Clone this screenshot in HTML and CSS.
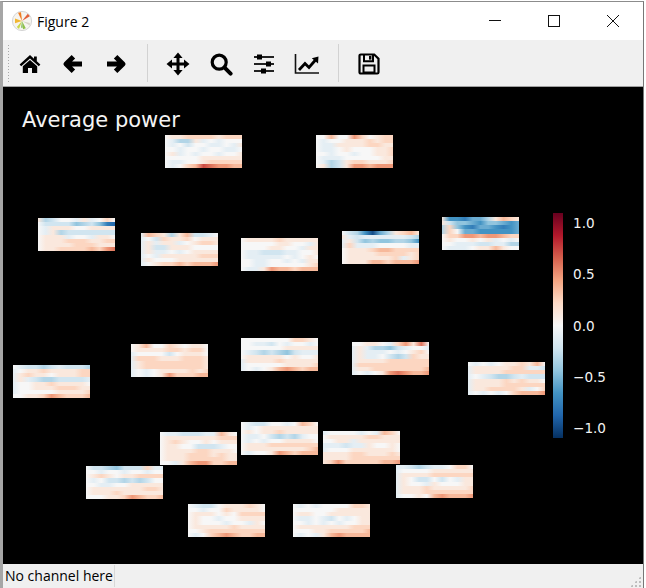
FILE: index.html
```html
<!DOCTYPE html>
<html lang="en">
<head>
<meta charset="utf-8">
<title>Figure 2</title>
<link rel="stylesheet" href="styles.css">
</head>
<body>
<div class="window">
  <header class="titlebar">
    <svg class="appicon" width="22" height="22" viewBox="0 0 22 22" aria-hidden="true">
      <circle cx="11" cy="11" r="9.6" fill="#f6f4ef" stroke="#d5d5d5" stroke-width="1"/>
      <path d="M11 11L4 8.5V13.2Z" fill="#f2b632"/>
      <path d="M11 11L7 2.8L10 2.2Z" fill="#ef7d22"/>
      <path d="M11 11L16.8 3.8L18.8 6.2Z" fill="#e2603a"/>
      <path d="M11 11L18.8 13V15.4Z" fill="#d9d4c8"/>
      <path d="M11 11L14.8 18.2L12 19.2Z" fill="#8fc149"/>
      <path d="M11 11L8 19L5.8 17Z" fill="#c9d648"/>
      <path d="M11 11L11.6 17.8H10.2Z" fill="#6fb04a"/>
    </svg>
    <span class="title">Figure 2</span>
    <div class="winbtns">
      <div class="winbtn"><svg width="14" height="14" viewBox="0 0 14 14" aria-hidden="true"><path d="M1 6.5H13" stroke="#111" stroke-width="1"/></svg></div>
      <div class="winbtn"><svg width="14" height="14" viewBox="0 0 14 14" aria-hidden="true"><rect x="1.5" y="1.5" width="11" height="11" fill="none" stroke="#111" stroke-width="1"/></svg></div>
      <div class="winbtn"><svg width="14" height="14" viewBox="0 0 14 14" aria-hidden="true"><path d="M1 1L13 13M13 1L1 13" stroke="#111" stroke-width="1"/></svg></div>
    </div>
  </header>

  <nav class="toolbar">
    <div class="grip"></div>
    <div class="tool"><svg width="24" height="24" viewBox="0 0 24 24" aria-hidden="true"><path d="M12 3L1.6 12.4L3.2 14.2L12 6.4L20.8 14.2L22.4 12.4L18.8 9.2V4.4H16V6.7Z" fill="#000"/><path d="M12 8L4.8 14.2V21H10V16H14V21H19.2V14.2Z" fill="#000"/></svg></div>
    <div class="tool"><svg width="24" height="24" viewBox="0 0 24 24" aria-hidden="true"><path d="M21 12H6M12.4 4.8L5 12L12.4 19.2" fill="none" stroke="#000" stroke-width="5" stroke-linejoin="round"/></svg></div>
    <div class="tool"><svg width="24" height="24" viewBox="0 0 24 24" aria-hidden="true"><path d="M3 12H18M11.6 4.8L19 12L11.6 19.2" fill="none" stroke="#000" stroke-width="5" stroke-linejoin="round"/></svg></div>
    <div class="sep"></div>
    <div class="tool"><svg width="24" height="24" viewBox="0 0 24 24" aria-hidden="true"><path d="M12 4V20M4 12H20" stroke="#000" stroke-width="3"/><path d="M12 .5L16.6 6H7.4ZM12 23.5L16.6 18H7.4ZM.5 12L6 7.4V16.6ZM23.5 12L18 7.4V16.6Z" fill="#000"/></svg></div>
    <div class="tool"><svg width="24" height="24" viewBox="0 0 24 24" aria-hidden="true"><circle cx="10.2" cy="10.2" r="7" fill="none" stroke="#000" stroke-width="3.2"/><path d="M15.6 15.6L21.6 21.6" stroke="#000" stroke-width="4" stroke-linecap="round"/></svg></div>
    <div class="tool"><svg width="24" height="24" viewBox="0 0 24 24" aria-hidden="true"><path d="M2 5H22M2 12H22M2 19H22" stroke="#222" stroke-width="2"/><rect x="5" y="2.5" width="5" height="5" fill="#000"/><rect x="14" y="9.5" width="5" height="5" fill="#000"/><rect x="9" y="16.5" width="5" height="5" fill="#000"/></svg></div>
    <div class="tool"><svg width="26" height="24" viewBox="0 0 26 24" aria-hidden="true"><path d="M1.5 2V21H25" fill="none" stroke="#111" stroke-width="1.6"/><path d="M5 18L11 11.5L15 15.5L21.5 8" fill="none" stroke="#000" stroke-width="2.8"/><path d="M24.5 4.5L24 11.5L17.8 6.2Z" fill="#000"/></svg></div>
    <div class="sep"></div>
    <div class="tool"><svg width="24" height="24" viewBox="0 0 24 24" aria-hidden="true"><path d="M3.8 2.5H17.2L21.5 6.8V20.2A1.3 1.3 0 0 1 20.2 21.5H3.8A1.3 1.3 0 0 1 2.5 20.2V3.8A1.3 1.3 0 0 1 3.8 2.5Z" fill="none" stroke="#000" stroke-width="2.2"/><path d="M7 3V9.2H16V3" fill="none" stroke="#000" stroke-width="2"/><rect x="12" y="4" width="2.4" height="3.6" fill="#000"/><rect x="6.5" y="13.5" width="11" height="7" fill="none" stroke="#000" stroke-width="2"/></svg></div>
  </nav>

  <main class="plot" id="plot">
    <div class="plot-title">Average power</div>
    <div class="colorbar"></div>
    <span class="tick tick-a">1.0</span>
    <span class="tick tick-b">0.5</span>
    <span class="tick tick-c">0.0</span>
    <span class="tick tick-d">−0.5</span>
    <span class="tick tick-e">−1.0</span>
  </main>

  <footer class="statusbar">
    <span class="status-text">No channel here</span>
    <div class="sizegrip"></div>
  </footer>
</div>
<script src="script.js"></script>
</body>
</html>
```
FILE: styles.css
```css
html, body {
  margin: 0;
  padding: 0;
  background: #fff;
}
.window {
  box-sizing: border-box;
  width: 644px;
  height: 587px;
  margin-top: 1px;
  border-top: 1px solid #8c8c8c;
  border-left: 3px solid #a6a6a6;
  border-right: 1px solid #777;
  display: flex;
  flex-direction: column;
  overflow: hidden;
}
.titlebar {
  height: 38px;
  flex: none;
  display: flex;
  align-items: center;
  background: #fff;
  padding-left: 8px;
}
.appicon { flex: none; }
.title {
  margin-left: 4px;
  font: 14px "Open Sans", sans-serif;
  color: #000;
}
.winbtns {
  margin-left: auto;
  margin-right: 1px;
  display: flex;
}
.winbtn {
  width: 59px;
  height: 38px;
  display: flex;
  align-items: center;
  justify-content: center;
}
.toolbar {
  height: 46px;
  flex: none;
  display: flex;
  align-items: center;
  background: #f0f0f0;
  border-bottom: 1px solid #a0a0a0;
  box-sizing: content-box;
}
.grip {
  width: 2px;
  height: 38px;
  margin-left: 3.5px;
  flex: none;
  background-image: radial-gradient(circle, #a8a8a8 0.9px, transparent 1px);
  background-size: 3px 3px;
}
.tool {
  box-sizing: border-box;
  width: 43px;
  height: 46px;
  padding-top: 2px;
  flex: none;
  display: flex;
  align-items: center;
  justify-content: center;
}
.sep {
  width: 1px;
  height: 38px;
  flex: none;
  margin: 0 9px;
  background: #d2d2d2;
}
.plot {
  position: relative;
  flex: 1;
  background: #000;
  overflow: hidden;
}
.plot-title {
  position: absolute;
  left: 19px;
  top: 20px;
  font: 21px/26px "DejaVu Sans", sans-serif;
  color: #f4f4f4;
  white-space: nowrap;
}
.tile {
  position: absolute;
  display: block;
  width: 77px;
  height: 33px;
}
.colorbar {
  position: absolute;
  left: 550px;
  top: 126px;
  width: 10px;
  height: 225px;
  background: linear-gradient(to bottom, #67001f 0%, #b2182b 10%, #d6604d 20%, #f4a582 30%, #fddbc7 40%, #f7f7f7 50%, #d1e5f0 60%, #92c5de 70%, #4393c3 80%, #2166ac 90%, #053061 100%);
}
.tick {
  position: absolute;
  left: 570px;
  font: 13.6px/16px "DejaVu Sans", sans-serif;
  color: #f2f2f2;
  white-space: nowrap;
}
.tick-a { top: 128px; }
.tick-b { top: 179px; }
.tick-c { top: 231px; }
.tick-d { top: 282px; }
.tick-e { top: 333px; }
.statusbar {
  height: 24px;
  flex: none;
  display: flex;
  align-items: center;
  background: #f0f0f0;
  position: relative;
}
.status-text {
  box-sizing: border-box;
  height: 22px;
  padding-left: 2px;
  width: 112px;
  border-right: 1px solid #d8d8d8;
  font: 14px/22px "Open Sans", sans-serif;
  color: #000;
  white-space: nowrap;
}
.sizegrip {
  position: absolute;
  right: 2px;
  bottom: 1px;
  width: 11px;
  height: 11px;
  background-image: radial-gradient(circle, #bdbdbd 1.4px, transparent 1.5px);
  background-size: 4px 4px;
  clip-path: polygon(100% 0, 100% 100%, 0 100%);
}
```
FILE: script.js
```js
var STOPS = [
  [-1.1, [5, 48, 97]], [-0.88, [33, 102, 172]], [-0.66, [67, 147, 195]],
  [-0.44, [146, 197, 222]], [-0.22, [209, 229, 240]], [0, [247, 247, 247]],
  [0.22, [253, 219, 199]], [0.44, [244, 165, 130]], [0.66, [214, 96, 77]],
  [0.88, [178, 24, 43]], [1.1, [103, 0, 31]]
];
function color(v) {
  for (var i = 1; i < STOPS.length; i++) {
    if (v <= STOPS[i][0]) {
      var a = STOPS[i - 1], b = STOPS[i], t = (v - a[0]) / (b[0] - a[0]);
      return "rgb(" + [0, 1, 2].map(function (k) {
        return Math.round(a[1][k] + (b[1][k] - a[1][k]) * t);
      }).join(",") + ")";
    }
  }
  return "rgb(103,0,31)";
}
function value(ch) {
  if (ch >= "0" && ch <= "9") return (ch.charCodeAt(0) - 48) * 0.12;
  return -(ch.charCodeAt(0) - 96) * 0.11;
}
/* x, y in window pixels; 8 rows of power values: digits = positive steps, letters = negative steps */
var TILES = [
  [165, 135, ["01122221222", "0acc1a0a000", "0a0b00aa0a1", "00a00a00aa0", "01a0a00a001", "00000111111", "0aa00122222", "0a023654433"]],
  [316, 135, ["00300420122", "0a001112122", "0aa11112211", "0aa01000112", "00a00a00112", "0aaa0000011", "0acb1221112", "01cb1443444"]],
  [38, 218, ["1cb00a1a020", "0bbbbdcbdgh", "0a111001111", "0a1cbbbbbbb", "0111a00a110", "01112221122", "01111222111", "01122223245"]],
  [141, 233, ["a321c13bba0", "a0b21120111", "a1a11a01221", "a1bb1110000", "a1aa0a01111", "a0a11111222", "a1000111111", "a0122323334"]],
  [241, 238, ["01111211111", "000001100a1", "00001100a11", "0aabbbaa001", "0aaaaa0a010", "00aa00a0a11", "00aa0000012", "0aa14332333"]],
  [342, 231, ["0bcfiec1231", "1abaaaaaabc", "a1bdcddccdf", "a2aaa0000aa", "01112332222", "01111222212", "01111112a12", "01113323334"]],
  [442, 217, ["1ffgeec1321", "1bddefddefe", "c2dfgeefgfe", "c20eefffffe", "02244344322", "0100101a0a0", "00aaabbaacc", "0aaa0113100"]],
  [13, 365, ["0abbcbabbbc", "a0112111122", "a1211011122", "a1abccbbbba", "a0011211110", "a0011122211", "a0000011112", "00112432223"]],
  [131, 344, ["01300210110", "01111221220", "a0000b01110", "a2221112221", "a1222222221", "a1222222221", "a0a01111212", "a0a01422233"]],
  [241, 338, ["00000002210", "00aab0a00a0", "00000011111", "0abcbcdbaaa", "01111101001", "a1111211111", "a0000011112", "a0a01343233"]],
  [352, 342, ["00110a24150", "a1accdba00a", "a1aaa0a0120", "a1aa0bcb211", "a1111222222", "a2222222222", "a1122222223", "a0a01454334"]],
  [468, 362, ["0a0a0112130", "a1111122aab", "a1111222222", "a0abccbabbb", "a1111212110", "a1111222222", "a1122221a02", "a0a0a023334"]],
  [160, 432, ["0aabbbaa310", "01111111222", "01210010111", "01100bbba00", "01111221110", "01112221211", "01112222211", "00a13442233"]],
  [241, 422, ["0abb00a0320", "0a011111111", "01011211111", "0aa0bcbca00", "0a0a0011110", "01112222222", "01111111123", "0a001432333"]],
  [323, 431, ["a0000a0a320", "01111122111", "0011a111111", "aaabaa10010", "a0001111110", "11112211121", "11112222222", "12422222334"]],
  [396, 465, ["aabcbaa0220", "a0000111111", "a1111222222", "a10bb0b0a11", "a100a100011", "a1112111112", "a1112222222", "a0010343334"]],
  [86, 466, ["0bbcdbbb2aa", "00a00a00a00", "01210112222", "0a0bbcbcb00", "00aa0011111", "01111111221", "01112111111", "00011243223"]],
  [188, 504, ["0abb0111210", "00a00211110", "01110102222", "0100a001111", "01000a00a10", "01111121111", "00122222222", "0a023432233"]],
  [293, 504, ["0a0a0000221", "00000011111", "01100111111", "0aa0ab0a011", "00a0a0a0011", "01111111222", "00011222223", "0a0a1343333"]]
];
var plot = document.getElementById("plot");
TILES.forEach(function (t) {
  var c = document.createElement("canvas");
  c.className = "tile";
  c.width = 77;
  c.height = 33;
  c.style.left = (t[0] - 3) + "px";
  c.style.top = (t[1] - 87) + "px";
  var g = c.getContext("2d");
  t[2].forEach(function (row, r) {
    var y0 = Math.round(r * 33 / 8), y1 = Math.round((r + 1) * 33 / 8);
    var grad = g.createLinearGradient(0, 0, 77, 0);
    for (var i = 0; i < row.length; i++) {
      grad.addColorStop(i / (row.length - 1), color(value(row[i])));
    }
    g.fillStyle = grad;
    g.fillRect(0, y0, 77, y1 - y0);
  });
  plot.appendChild(c);
});
```
